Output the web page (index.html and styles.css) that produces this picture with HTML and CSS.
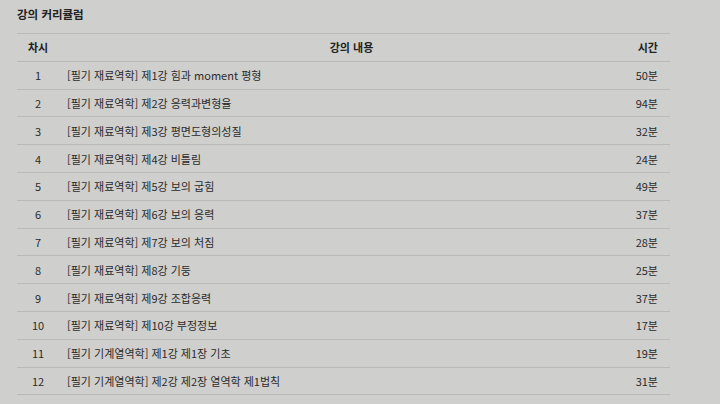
FILE: index.html
```html
<!DOCTYPE html>
<html lang="ko">
<head>
  <meta charset="UTF-8" />
  <meta name="viewport" content="width=device-width, initial-scale=1.0"/>
  <title>강의 커리큘럼</title>
  <link rel="stylesheet" href="styles.css">
</head>
<body>

  <div class="curriculum">
    <h2 class="title">강의 커리큘럼</h2>

    <!-- Lecture list -->
    <table class="lessons">
      <thead>
        <tr>
          <th class="no">차시</th>
          <th class="subject">강의 내용</th>
          <th class="time">시간</th>
        </tr>
      </thead>
      <tbody>
        <tr><td class="no">1</td><td class="subject">[필기 재료역학] 제1강 힘과 moment 평형</td><td class="time">50분</td></tr>
        <tr><td class="no">2</td><td class="subject">[필기 재료역학] 제2강 응력과변형율</td><td class="time">94분</td></tr>
        <tr><td class="no">3</td><td class="subject">[필기 재료역학] 제3강 평면도형의성질</td><td class="time">32분</td></tr>
        <tr><td class="no">4</td><td class="subject">[필기 재료역학] 제4강 비틀림</td><td class="time">24분</td></tr>
        <tr><td class="no">5</td><td class="subject">[필기 재료역학] 제5강 보의 굽힘</td><td class="time">49분</td></tr>
        <tr><td class="no">6</td><td class="subject">[필기 재료역학] 제6강 보의 응력</td><td class="time">37분</td></tr>
        <tr><td class="no">7</td><td class="subject">[필기 재료역학] 제7강 보의 처짐</td><td class="time">28분</td></tr>
        <tr><td class="no">8</td><td class="subject">[필기 재료역학] 제8강 기둥</td><td class="time">25분</td></tr>
        <tr><td class="no">9</td><td class="subject">[필기 재료역학] 제9강 조합응력</td><td class="time">37분</td></tr>
        <tr><td class="no">10</td><td class="subject">[필기 재료역학] 제10강 부정정보</td><td class="time">17분</td></tr>
        <tr><td class="no">11</td><td class="subject">[필기 기계열역학] 제1강 제1장 기초</td><td class="time">19분</td></tr>
        <tr><td class="no">12</td><td class="subject">[필기 기계열역학] 제2강 제2장 열역학 제1법칙</td><td class="time">31분</td></tr>
        <tr><td class="no">13</td><td class="subject">[필기 기계열역학] 제3강 제3장 열역학 제2법칙</td><td class="time">28분</td></tr>
      </tbody>
    </table>
  </div>

</body>
</html>
```

FILE: styles.css
```css
body {
  margin: 0;
  background: #cfcfcd;
  color: #2b2b2b;
  font-family: "Noto Sans CJK KR", "Noto Sans", sans-serif;
  font-size: 11px;
  overflow: hidden;
}

.curriculum {
  padding: 5px 50px 0 17px;
}

.title {
  margin: 0 0 9px;
  font-size: 11.5px;
  font-weight: bold;
  line-height: 19px;
  color: #222;
}

.lessons {
  width: 100%;
  border-collapse: collapse;
  border-top: 1px solid #b9b9b7;
}

.lessons th,
.lessons td {
  height: 26.8px;
  padding: 0;
  border-bottom: 1px solid #b9b9b7;
  vertical-align: middle;
  white-space: nowrap;
}

.lessons th {
  font-weight: bold;
  color: #222;
}

.lessons .no {
  width: 42px;
  text-align: center;
}

.lessons th.no {
  text-align: left;
  padding-left: 11px;
  width: 31px;
}

.lessons td.subject {
  padding-left: 8px;
  text-align: left;
}

.lessons th.subject {
  text-align: center;
  padding-left: 46px;
}

.lessons .time {
  width: 60px;
  text-align: right;
  padding-right: 12px;
}
```
